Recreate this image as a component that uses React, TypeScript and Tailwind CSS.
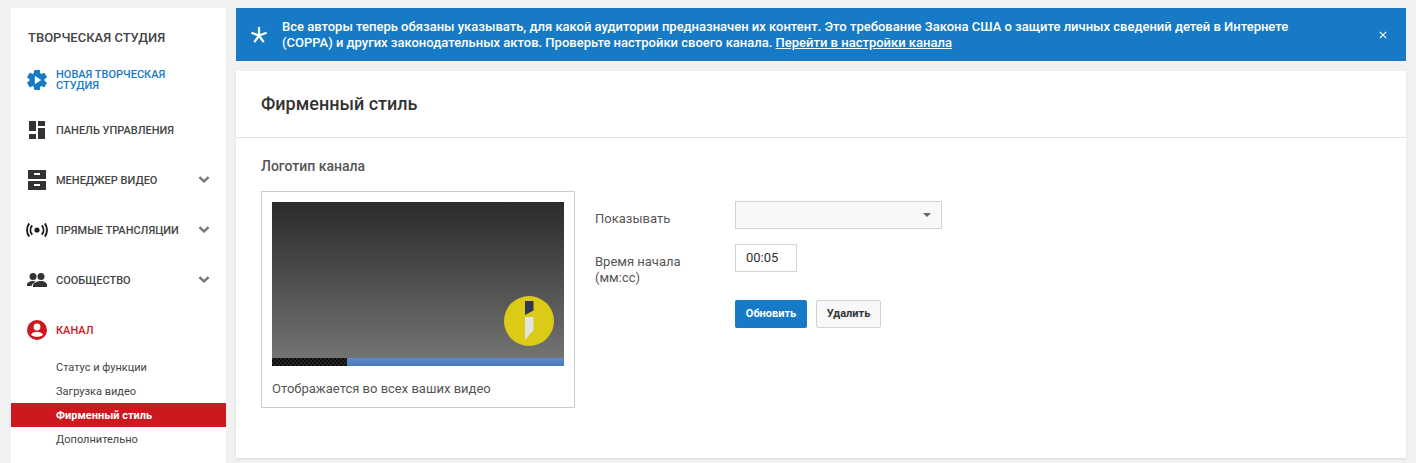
import React from "react";

const font = { fontFamily: "Roboto, 'Liberation Sans', sans-serif" };

function Chevron() {
  return (
    <svg width="12" height="8" viewBox="0 0 12 8" className="ml-auto mr-[16px]">
      <path d="M1.4 1.200 L6 5.400 L10.600 1.200" fill="none" stroke="#767676" strokeWidth="2.400" />
    </svg>
  );
}

function Item({ icon, label, color = "text-[#444444]", chevron = false, two = false }: { icon: React.ReactNode; label: React.ReactNode; color?: string; chevron?: boolean; two?: boolean }) {
  return (
    <div className="flex h-[50px] items-center">
      <div className="flex w-[45px] shrink-0 justify-center pl-[8px] pr-[1px]">{icon}</div>
      <span className={`text-[11px] font-medium ${two ? "leading-[11px]" : "leading-[14px]"} ${color}`}>{label}</span>
      {chevron && <Chevron />}
    </div>
  );
}

function Sub({ label, active = false }: { label: string; active?: boolean }) {
  return (
    <div className={`flex h-[24px] items-center pl-[45px] pt-[2px] text-[11px] ${active ? "bg-[#cc181e] font-bold text-white" : "text-[#444444]"}`}>
      {label}
    </div>
  );
}

export default function App() {
  return (
    <div className="flex h-[463px] w-[1416px] gap-[10px] overflow-hidden bg-[#f1f1f1] pl-[11px] pr-[10px] pt-[8px]" style={font}>
      <aside className="h-[480px] w-[215px] shrink-0 bg-white">
        <div className="pl-[17px] pt-[22px] text-[13px] font-medium leading-[15px] text-[#444444]">ТВОРЧЕСКАЯ СТУДИЯ</div>
        <div className="mt-[10px]">
          <Item
            two
            color="text-[#167ac6]"
            label={<>НОВАЯ ТВОРЧЕСКАЯ<br />СТУДИЯ</>}
            icon={
              <svg width="20" height="20" viewBox="0 0 20 20">
                <circle cx="10" cy="10" r="7.600" fill="#167ac6" />
                <g fill="#167ac6">
                  <rect x="7" y="0" width="6" height="20" rx="1" />
                  <rect x="7" y="0" width="6" height="20" rx="1" transform="rotate(60 10 10)" />
                  <rect x="7" y="0" width="6" height="20" rx="1" transform="rotate(120 10 10)" />
                </g>
                <path fill="#fff" d="M7.800 5.800v8.400l6.400-4.200z" />
              </svg>
            }
          />
          <Item
            label={<span className="relative top-[1px]">ПАНЕЛЬ УПРАВЛЕНИЯ</span>}
            icon={
              <svg width="16" height="18" viewBox="0 0 16 18">
                <path fill="#333" d="M0 0h7v10H0zM9 0h7v5H9zM9 7h7v11H9zM0 13h7v5H0z" />
              </svg>
            }
          />
          <Item
            chevron
            label={<span className="relative top-[1px]">МЕНЕДЖЕР ВИДЕО</span>}
            icon={
              <svg width="18" height="20" viewBox="0 0 18 20">
                <path fill="#333" fillRule="evenodd" d="M0 0h18v9H0zM6 3v2h6V3zM0 11h18v9H0zM6 14v2h6v-2z" />
              </svg>
            }
          />
          <Item
            chevron
            label={<span className="relative top-[1px]">ПРЯМЫЕ ТРАНСЛЯЦИИ</span>}
            icon={
              <svg width="22" height="14" viewBox="0 0 22 14" fill="none" stroke="#1c1c1c" strokeWidth="1.900">
                <circle cx="11" cy="7" r="2.600" fill="#1c1c1c" stroke="none" />
                <path d="M6.200 2.400a7 7 0 0 0 0 9.200M15.800 2.400a7 7 0 0 1 0 9.200" />
                <path d="M3.200 .4a11 11 0 0 0 0 13.200M18.800 .4a11 11 0 0 1 0 13.200" />
              </svg>
            }
          />
          <Item
            chevron
            label={<span className="relative top-[1px]">СООБЩЕСТВО</span>}
            icon={
              <svg width="20" height="14" viewBox="0 0 20 14">
                <circle cx="6" cy="3.500" r="3.500" fill="#333" />
                <circle cx="14" cy="3.500" r="3.500" fill="#333" />
                <path fill="#333" d="M0 13v-1.500C0 9.500 3.500 8 6 8c.9 0 1.900.2 2.800.5C6.800 9.600 5 11 4.500 13z" />
                <path fill="#333" d="M6 14v-2c0-2.300 4.800-4 8-4s6 1.700 6 4v2z" />
              </svg>
            }
          />
          <Item
            color="text-[#cc181e]"
            label={<span className="relative top-[1px]">КАНАЛ</span>}
            icon={
              <svg width="20" height="20" viewBox="0 0 20 20">
                <circle cx="10" cy="10" r="10" fill="#cc181e" />
                <circle cx="10" cy="7" r="3.400" fill="#fff" />
                <path fill="#fff" d="M4 14.700c.7-1.900 3.700-2.900 6-2.900s5.300 1 6 2.900c-1.300 1.300-3.500 2.100-6 2.100s-4.700-.8-6-2.100z" />
              </svg>
            }
          />
        </div>
        <div>
          <Sub label="Статус и функции" />
          <Sub label="Загрузка видео" />
          <Sub label="Фирменный стиль" active />
          <Sub label="Дополнительно" />
        </div>
      </aside>

      <main className="flex w-[1170px] flex-col gap-[10px]">
        <div className="flex h-[53px] items-center bg-[#167ac6] text-white">
          <span className="flex w-[46px] shrink-0 justify-center">
            <svg width="16" height="16" viewBox="0 0 16 16" stroke="#fff" strokeWidth="2.200">
              <path d="M8 8.500V0M8 8.500L.4 5.800M8 8.500l7.600-2.700M8 8.500l-4.700 6.700M8 8.500l4.700 6.700" />
            </svg>
          </span>
          <p className="w-[1030px] text-[13px] font-medium leading-[16px]">
            Все авторы теперь обязаны указывать, для какой аудитории предназначен их контент. Это требование Закона США о защите личных сведений детей в Интернете (COPPA) и других законодательных актов. Проверьте настройки своего канала. <span className="underline">Перейти в настройки канала</span>
          </p>
          <svg width="8" height="8" viewBox="0 0 8 8" stroke="#fff" strokeWidth="1.200" className="ml-[67px]">
            <path d="M.8 .8l6.400 6.400M7.200 .8L.8 7.200" />
          </svg>
        </div>

        <section className="h-[387px] bg-white shadow-[0_1px_2px_rgba(0,0,0,0.1)]">
          <header className="flex h-[67px] items-center border-b border-[#e2e2e2] pb-[2px] pl-[25px]">
            <h1 className="text-[18px] font-medium text-[#333333]">Фирменный стиль</h1>
          </header>
          <div className="pl-[25px] pt-[19px]">
            <h2 className="text-[14px] font-medium leading-[18px] text-[#555555]">Логотип канала</h2>
            <div className="mt-[16px] flex">
              <div className="h-[217px] w-[314px] border border-[#cccccc] p-[10px]">
                <div className="relative h-[164px] w-[292px] bg-gradient-to-b from-[#2b2b2b] to-[#777876]">
                  <svg width="50" height="50" viewBox="0 0 50 50" className="absolute right-[10px] top-[94px]">
                    <circle cx="25" cy="25" r="25" fill="#dccb16" />
                    <path fill="#303652" d="M21 5h8.500v9.500L21 19z" />
                    <path fill="#e3e3e3" d="M21 21h8.500v13L21 44z" />
                  </svg>
                  <div className="absolute bottom-0 left-0 flex h-[8px] w-full">
                    <div className="w-[75px] bg-[#161616] bg-[repeating-conic-gradient(#0d0d0d_0_25%,#262626_0_50%)] bg-[length:4px_4px]" />
                    <div className="flex-1 bg-gradient-to-b from-[#5b8bd0] to-[#4a78b8]" />
                  </div>
                </div>
                <p className="mt-[15px] text-[13px] leading-[16px] text-[#555555]">Отображается во всех ваших видео</p>
              </div>
              <div className="ml-[20px] pt-[10px]">
                <div className="flex">
                  <label className="flex h-[28px] w-[140px] items-center pt-[7px] text-[13px] text-[#555555]">Показывать</label>
                  <div className="flex h-[28px] w-[207px] items-center justify-end border border-[#d3d3d3] bg-[#f8f8f8] pr-[10px]">
                    <div className="h-0 w-0 border-x-[4px] border-t-[4px] border-x-transparent border-t-[#666666]" />
                  </div>
                </div>
                <div className="mt-[15px] flex">
                  <label className="w-[140px] pt-[10px] text-[13px] leading-[16px] text-[#555555]">Время начала<br />(мм:сс)</label>
                  <div className="flex h-[28px] w-[62px] items-center border border-[#d3d3d3] pl-[10px] text-[13px] text-[#333333]">00:05</div>
                </div>
                <div className="ml-[140px] mt-[14px] flex gap-[9px]">
                  <button className="h-[28px] w-[72px] rounded-[2px] bg-[#167ac6] text-[11px] font-bold text-white">Обновить</button>
                  <button className="h-[28px] w-[65px] rounded-[2px] border border-[#d3d3d3] bg-[#f8f8f8] text-[11px] font-bold text-[#333333]">Удалить</button>
                </div>
              </div>
            </div>
          </div>
        </section>
      </main>
    </div>
  );
}
